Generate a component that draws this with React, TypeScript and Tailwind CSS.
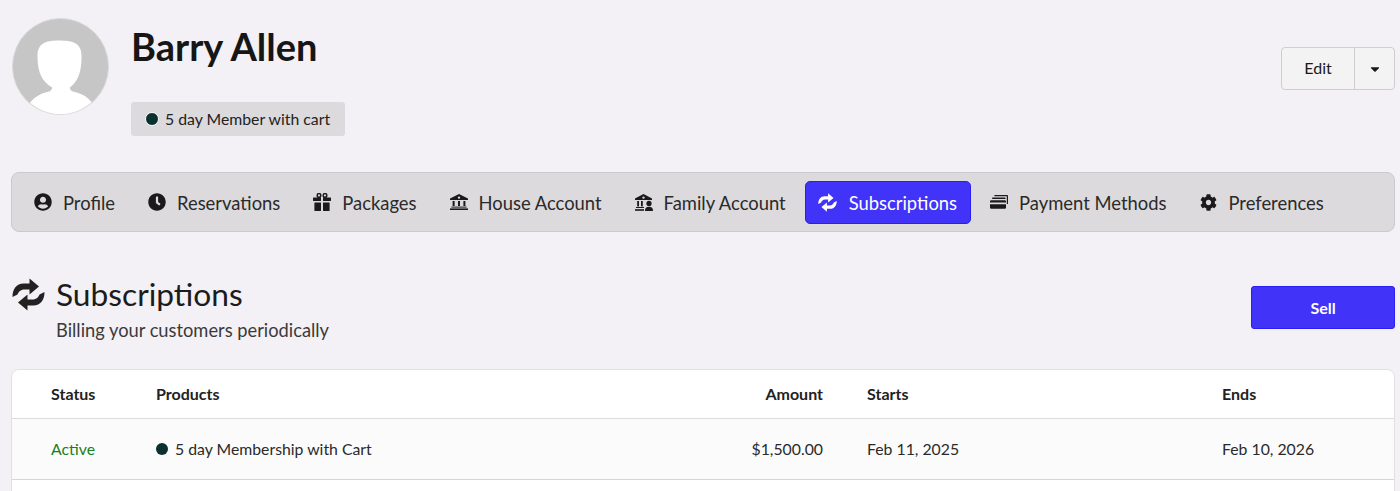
import React from 'react';
import { FaUserCircle, FaClock, FaCog, FaCaretDown } from 'react-icons/fa';

function SyncIcon({ className }: { className?: string }) {
  const arrow = 'M0 19 C0 11 4 5.5 11 5.5 H17 V0.5 L26.5 8.5 L17 16.5 V11.5 H12 C8 11.5 6 14 5 16.5 Z';
  return (
    <svg viewBox="0 0 32 33" className={className} fill="currentColor">
      <path d={arrow} />
      <path d={arrow} transform="rotate(180 16 16.5)" />
    </svg>
  );
}

function GiftIcon({ className }: { className?: string }) {
  return (
    <svg viewBox="0 0 18 18" className={className} fill="currentColor">
      <circle cx="6" cy="2.4" r="1.8" fill="none" stroke="currentColor" strokeWidth="1.5" />
      <circle cx="12" cy="2.4" r="1.8" fill="none" stroke="currentColor" strokeWidth="1.5" />
      <rect x="0" y="4.6" width="8" height="3.4" rx="0.4" />
      <rect x="10" y="4.6" width="8" height="3.4" rx="0.4" />
      <rect x="1.4" y="9.4" width="6.6" height="8.6" rx="0.4" />
      <rect x="10" y="9.4" width="6.6" height="8.6" rx="0.4" />
    </svg>
  );
}

function BankIcon({ className }: { className?: string }) {
  return (
    <svg viewBox="0 0 18 16" className={className} fill="currentColor">
      <path fillRule="evenodd" d="M9 0 L18 4.5 V6 H0 V4.5 Z M9 2.4 A1.2 1.2 0 1 0 9 4.8 A1.2 1.2 0 1 0 9 2.4 Z" />
      <rect x="2.6" y="7" width="2" height="5" />
      <rect x="8" y="7" width="2" height="5" />
      <rect x="13.4" y="7" width="2" height="5" />
      <rect x="1.4" y="12.6" width="15.2" height="1" />
      <rect x="0" y="14.4" width="18" height="1.6" />
    </svg>
  );
}

function FamilyIcon({ className }: { className?: string }) {
  return (
    <svg viewBox="0 0 18 17" className={className} fill="currentColor">
      <path fillRule="evenodd" d="M8.5 0 L17 4.5 V6 H0 V4.5 Z M8.5 2.4 A1.2 1.2 0 1 0 8.5 4.8 A1.2 1.2 0 1 0 8.5 2.4 Z" />
      <rect x="2.2" y="7" width="1.8" height="5.4" />
      <rect x="6" y="7" width="1.8" height="5.4" />
      <rect x="1" y="13" width="8" height="1" />
      <rect x="0" y="15.2" width="9" height="1.6" />
      <circle cx="14" cy="9.4" r="2.6" />
      <path d="M10 17 C10 13.8 11.6 12.8 14 12.8 C16.4 12.8 18 13.8 18 17 Z" />
    </svg>
  );
}

function CardsIcon({ className }: { className?: string }) {
  return (
    <svg viewBox="0 0 18 14" className={className} fill="currentColor">
      <path d="M4.4 0 H17 A1 1 0 0 1 18 1 V9 H16.8 V1.3 H4.4 Z" />
      <path d="M2.2 2.6 H14.6 A1 1 0 0 1 15.6 3.6 V3.9 H2.2 Z" />
      <path d="M1.2 5.2 H14.8 A1.2 1.2 0 0 1 16 6.4 V7.6 H0 V6.4 A1.2 1.2 0 0 1 1.2 5.2 Z" />
      <path d="M0 9.2 H16 V12.6 A1.2 1.2 0 0 1 14.8 13.8 H1.2 A1.2 1.2 0 0 1 0 12.6 Z" />
    </svg>
  );
}

const tabs = [
  { label: 'Profile', icon: <FaUserCircle className="w-[18px] h-[18px]" /> },
  { label: 'Reservations', icon: <FaClock className="w-[18px] h-[18px]" /> },
  { label: 'Packages', icon: <GiftIcon className="w-[18px] h-[18px]" /> },
  { label: 'House Account', icon: <BankIcon className="w-[18px] h-[16px]" /> },
  { label: 'Family Account', icon: <FamilyIcon className="w-[18px] h-[17px]" /> },
  { label: 'Subscriptions', icon: <SyncIcon className="w-[19px] h-[19px] shrink-0" />, active: true },
  { label: 'Payment Methods', icon: <CardsIcon className="w-[18px] h-[14px]" /> },
  { label: 'Preferences', icon: <FaCog className="w-[17px] h-[17px]" /> },
];

export default function App() {
  return (
    <div className="h-[491px] overflow-hidden bg-[#f3f1f5] pl-[11px] pr-[5px] text-[#1a1a1a] font-['Lato','Liberation_Sans',sans-serif]">
      {/* header */}
      <div className="flex justify-between h-[172px] pt-[18px]">
        <div className="flex">
          <div className="ml-[1px] w-[97px] h-[97px] rounded-full border border-[#dcdadc] bg-[#c6c6c6] overflow-hidden shrink-0">
            <svg viewBox="0 0 97 97" className="w-full h-full" fill="#fff">
              <path d="M47 22 C62 22 70 25 70 38 C70 55 66 64 58 70 C58 72 59 73 61 74 C70 76 76 79 81 86 L81 97 H17 V86 C21 80 28 76 37 74 C39 73 40 72 40 70 C30 64 25 55 25 38 C25 25 33 22 47 22 Z" />
            </svg>
          </div>
          <div className="ml-[22px]">
            <h1 className="text-[38px] leading-[46px] font-bold mt-[5px] text-[#161616]">Barry Allen</h1>
            <div className="mt-[33px] w-[214px] h-[34px] rounded-[3px] bg-[#dcdadd] flex items-center pl-[14px] gap-[6px] text-[15.8px] text-[#222]">
              <span className="w-[14px] h-[14px] rounded-full bg-[#0b3030] border border-white shrink-0" />
              5 day Member with cart
            </div>
          </div>
        </div>
        <div className="mt-[29px] flex h-[43px] w-[114px] rounded-[4px] border border-[#cfcdd0] bg-[#f2f3f2] text-[16px] text-[#1a1a1a]">
          <div className="w-[73px] pb-[2px] flex items-center justify-center border-r border-[#cfcdd0]">Edit</div>
          <div className="flex-1 flex items-center justify-center">
            <FaCaretDown className="w-[14px] h-[14px]" />
          </div>
        </div>
      </div>

      {/* tabs */}
      <div className="h-[60px] rounded-[8px] border border-[#cbc9cc] bg-[#dcdadd] flex items-center pl-[8px] gap-[5px]">
        {tabs.map((t) => (
          <div
            key={t.label}
            className={
              t.active
                ? 'h-[43px] px-[13px] rounded-[5px] border border-[#2a1ff0] bg-[#4133f7] text-white flex items-center gap-[12px] text-[18.4px]'
                : 'h-[43px] px-[14px] flex items-center gap-[11px] text-[18.4px] text-[#2a2a2a]'
            }
          >
            <span className={t.active ? 'text-white w-[18px] flex justify-center' : 'text-[#1a1a1a] w-[18px] flex justify-center'}>{t.icon}</span>
            <span className="pt-[3px]">{t.label}</span>
          </div>
        ))}
      </div>

      {/* section heading */}
      <div className="flex justify-between mt-[54px]">
        <div className="flex">
          <SyncIcon className="w-[33px] h-[33px] mt-[-8px] ml-[1px] text-[#222]" />
          <div className="ml-[11px]">
            <h2 className="text-[31.7px] leading-[36px] mt-[-10px] text-[#1c1c1c]">Subscriptions</h2>
            <p className="text-[18.3px] leading-[24px] mt-[6px] text-[#3a3a3a]">Billing your customers periodically</p>
          </div>
        </div>
        <button className="w-[144px] h-[43px] rounded-[3px] border border-[#2a1ff0] bg-[#4133f7] text-white text-[16px] font-bold">
          Sell
        </button>
      </div>

      {/* table */}
      <div className="mt-[27px] rounded-t-[8px] border border-[#e2e0e3] bg-white text-[15.8px]">
        <div className="flex items-center h-[49px] border-b border-[#dcdcdc] font-bold text-[16px] text-[#222]">
          <div className="w-[144px] pl-[39px]">Status</div>
          <div className="w-[538px]">Products</div>
          <div className="w-[129px] text-right">Amount</div>
          <div className="w-[399px] pl-[44px]">Starts</div>
          <div>Ends</div>
        </div>
        <div className="flex items-center h-[61px] border-b border-[#d6d6d6] bg-[#fbfbfb] text-[#2a2a2a]">
          <div className="w-[144px] pl-[39px] text-[#15801f]">Active</div>
          <div className="w-[538px] flex items-center gap-[7px]">
            <span className="w-[12px] h-[12px] rounded-full bg-[#0b3030] shrink-0" />5 day Membership with Cart
          </div>
          <div className="w-[129px] text-right">$1,500.00</div>
          <div className="w-[399px] pl-[44px]">Feb 11, 2025</div>
          <div>Feb 10, 2026</div>
        </div>
        <div className="h-[20px]" />
      </div>
    </div>
  );
}
